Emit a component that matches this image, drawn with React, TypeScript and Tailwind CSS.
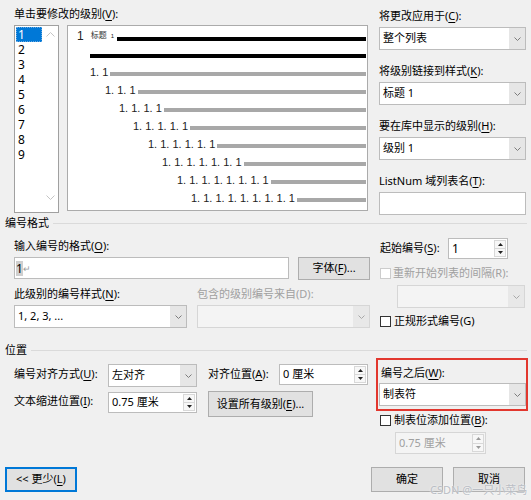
import React from "react";

const Chevron = ({ color = "#808080" }: { color?: string }) => (
  <svg width="7" height="4" viewBox="0 0 7 4">
    <path d="M0.5 0.5 L3.5 3.5 L6.5 0.5" fill="none" stroke={color} strokeWidth="1" />
  </svg>
);

const ChevronUp = ({ color = "#c4c4c4" }: { color?: string }) => (
  <svg width="9" height="5" viewBox="0 0 9 5">
    <path d="M0.5 4.5 L4.5 0.5 L8.5 4.5" fill="none" stroke={color} strokeWidth="1" />
  </svg>
);
const ChevronDown = ({ color = "#c4c4c4" }: { color?: string }) => (
  <svg width="9" height="5" viewBox="0 0 9 5">
    <path d="M0.5 0.5 L4.5 4.5 L8.5 0.5" fill="none" stroke={color} strokeWidth="1" />
  </svg>
);

const TriUp = ({ color = "#222" }: { color?: string }) => (
  <svg width="5" height="3" viewBox="0 0 5 3">
    <path d="M0 3 L2.5 0 L5 3 Z" fill={color} />
  </svg>
);
const TriDown = ({ color = "#222" }: { color?: string }) => (
  <svg width="5" height="3" viewBox="0 0 5 3">
    <path d="M0 0 L2.5 3 L5 0 Z" fill={color} />
  </svg>
);

function Combo({ className = "", text = "", disabled = false }: { className?: string; text?: React.ReactNode; disabled?: boolean }) {
  return (
    <div
      className={`flex h-[23px] shrink-0 border ${
        disabled ? "border-[#d6d6d6] bg-[#f4f4f4]" : "border-[#bcbcbc] bg-white"
      } ${className}`}
    >
      <div className={`flex flex-1 items-center pl-[3px] ${disabled ? "text-[#a0a0a0]" : "text-black"}`}>{text}</div>
      <div className={`flex w-[16px] items-center justify-center ${disabled ? "bg-[#e8e8e8]" : "bg-[#e6e6e6]"}`}>
        <Chevron color={disabled ? "#a8a8a8" : "#7c7c7c"} />
      </div>
    </div>
  );
}

function Spin({ className = "", text = "", disabled = false }: { className?: string; text?: React.ReactNode; disabled?: boolean }) {
  return (
    <div
      className={`flex shrink-0 border ${
        disabled ? "border-[#d6d6d6] bg-[#f4f4f4]" : "border-[#bcbcbc] bg-white"
      } ${className}`}
    >
      <div className={`flex flex-1 items-center pl-[3px] ${disabled ? "text-[#a0a0a0]" : "text-black"}`}>{text}</div>
      <div className="my-[1px] mr-[1px] flex w-[12px] flex-col border border-[#d8d8d8] bg-[#f7f7f7]">
        <div className="flex flex-1 items-center justify-center border-b border-[#d8d8d8]">
          <TriUp color={disabled ? "#9a9a9a" : "#222"} />
        </div>
        <div className="flex flex-1 items-center justify-center">
          <TriDown color={disabled ? "#9a9a9a" : "#222"} />
        </div>
      </div>
    </div>
  );
}

function Check({ disabled = false }: { disabled?: boolean }) {
  return (
    <div
      className={`h-[11px] w-[11px] shrink-0 border bg-white ${
        disabled ? "border-[#cccccc]" : "border-[#333333]"
      }`}
    />
  );
}

function Btn({ className = "", children }: { className?: string; children: React.ReactNode }) {
  return (
    <div className={`flex shrink-0 items-center justify-center border border-[#adadad] bg-[#e1e1e1] ${className}`}>
      {children}
    </div>
  );
}

const U = ({ children }: { children: React.ReactNode }) => (
  <span className="underline decoration-1 underline-offset-[2px]">{children}</span>
);

const Label = ({ className = "", children }: { className?: string; children: React.ReactNode }) => (
  <div className={`h-[14px] shrink-0 whitespace-nowrap leading-[14px] ${className}`}>{children}</div>
);

function SectionHeader({ className = "", title }: { className?: string; title: string }) {
  return (
    <div className={`flex h-[14px] items-center pl-[5px] pr-[4px] ${className}`}>
      <span className="leading-[14px]">{title}</span>
      <div className="ml-[4px] h-px flex-1 bg-[#dadada]" />
    </div>
  );
}

const levels = [
  { pl: "pl-[22px]", t: "1. 1" },
  { pl: "pl-[37px]", t: "1. 1. 1" },
  { pl: "pl-[51px]", t: "1. 1. 1. 1" },
  { pl: "pl-[65px]", t: "1. 1. 1. 1. 1" },
  { pl: "pl-[80px]", t: "1. 1. 1. 1. 1. 1" },
  { pl: "pl-[94px]", t: "1. 1. 1. 1. 1. 1. 1" },
  { pl: "pl-[109px]", t: "1. 1. 1. 1. 1. 1. 1. 1" },
  { pl: "pl-[123px]", t: "1. 1. 1. 1. 1. 1. 1. 1. 1" },
];

export default function App() {
  return (
    <div className="relative flex h-[500px] w-[531px] flex-col overflow-hidden bg-[#f0f0f0] font-['Noto_Sans','Noto_Sans_CJK_SC',sans-serif] text-[11px] text-black">
      {/* Top area */}
      <div className="flex pl-[14px] pt-[7px]">
        <div className="flex w-[354px] flex-col">
          <Label>
            单击要修改的级别(<U>V</U>):
          </Label>
          <div className="mt-[4px] flex gap-[8px]">
            {/* list box */}
            <div className="flex h-[188px] w-[45px] border border-[#a0a0a0] bg-white">
              <div className="w-[27px] pl-[1px] pt-[1px] text-[12px]">
                {["1", "2", "3", "4", "5", "6", "7", "8", "9"].map((n, i) => (
                  <div
                    key={n}
                    className={`h-[15px] pl-[2px] leading-[15px] ${
                      i === 0 ? "bg-[#0078d7] text-white outline-1 outline-dotted outline-[#6aa9e0] -outline-offset-1" : ""
                    }`}
                  >
                    {n}
                  </div>
                ))}
              </div>
              <div className="flex flex-1 flex-col items-center justify-between pb-[12px] pt-[6px]">
                <ChevronUp />
                <ChevronDown />
              </div>
            </div>
            {/* preview */}
            <div className="h-[186px] w-[301px] border border-[#ababab] bg-white pt-[1px] font-['Liberation_Sans','Noto_Sans_CJK_SC',sans-serif] text-[11px] text-[#222]">
              <div className="flex h-[18px] items-start pl-[9px] pr-[1px]">
                <span className="text-[12px] leading-[18px]">1</span>
                <span className="ml-[7px] text-[8px] leading-[18px] text-[#333]">标题</span>
                <span className="ml-[4px] text-[6px] leading-[18px]">1</span>
                <div className="ml-[3px] mt-[10px] h-[4px] flex-1 bg-black" />
              </div>
              <div className="flex h-[18px] items-start pl-[22px] pr-[1px]">
                <div className="mt-[9px] h-[4px] flex-1 bg-black" />
              </div>
              {levels.map((l) => (
                <div key={l.t} className={`flex h-[18px] items-start pr-[1px] ${l.pl}`}>
                  <span className="whitespace-pre leading-[18px]">{l.t}</span>
                  <div className="ml-[2px] mt-[9px] h-[4px] flex-1 bg-[#a8a8a8]" />
                </div>
              ))}
            </div>
          </div>
        </div>
        <div className="ml-[11px] mt-[2px] flex w-[147px] flex-col">
          <Label>
            将更改应用于(<U>C</U>):
          </Label>
          <Combo className="mt-[4px] w-[147px]" text="整个列表" />
          <Label className="mt-[14px]">
            将级别链接到样式(<U>K</U>):
          </Label>
          <Combo className="mt-[4px] w-[147px]" text="标题 1" />
          <Label className="mt-[14px]">
            要在库中显示的级别(<U>H</U>):
          </Label>
          <Combo className="mt-[4px] w-[147px]" text="级别 1" />
          <Label className="mt-[14px]">
            ListNum 域列表名(<U>T</U>):
          </Label>
          <div className="mt-[4px] h-[23px] w-[147px] border border-[#bcbcbc] bg-white" />
        </div>
      </div>

      {/* 编号格式 */}
      <SectionHeader className="mt-[1px]" title="编号格式" />
      <div className="flex">
        <div className="flex w-[380px] flex-col pl-[14px]">
          <Label className="mt-[9px]">
            输入编号的格式(<U>O</U>):
          </Label>
          <div className="mt-[4px] flex items-start">
            <div className="flex h-[22px] w-[275px] items-center border border-[#bcbcbc] bg-white pl-[1px] text-[12px]">
              <span className="bg-[#cfcfcf] leading-[15px]">1</span>
              <span className="text-[9px] leading-[15px] text-[#9a9a9a]">↵</span>
            </div>
            <Btn className="ml-[9px] h-[23px] w-[72px]">
              字体(<U>F</U>)...
            </Btn>
          </div>
          <div className="mt-[7px] flex">
            <Label className="w-[183px]">
              此级别的编号样式(<U>N</U>):
            </Label>
            <Label className="text-[#a0a0a0]">包含的级别编号来自(D):</Label>
          </div>
          <div className="mt-[4px] flex gap-[10px]">
            <Combo className="w-[173px]" text="1, 2, 3, ..." />
            <Combo className="w-[173px]" disabled />
          </div>
        </div>
        <div className="flex w-[146px] flex-col">
          <div className="mt-[8px] flex h-[21px] items-center">
            <span className="w-[68px] whitespace-nowrap">
              起始编号(<U>S</U>):
            </span>
            <Spin className="h-[21px] w-[60px]" text={<span className="text-[12px]">1</span>} />
          </div>
          <div className="mt-[7px] flex h-[14px] items-center">
            <Check disabled />
            <span className="ml-[2px] whitespace-nowrap text-[#a0a0a0]">重新开始列表的间隔(R):</span>
          </div>
          <Combo className="ml-[17px] mt-[5px] w-[128px]" disabled />
          <div className="mt-[6px] flex h-[14px] items-center">
            <Check />
            <span className="ml-[3px] whitespace-nowrap">正规形式编号(G)</span>
          </div>
        </div>
      </div>

      {/* 位置 */}
      <SectionHeader className="mt-[15px]" title="位置" />
      <div className="flex">
        <div className="flex w-[376px] flex-col pl-[14px]">
          <div className="mt-[7px] flex items-start">
            <div className="flex h-[21px] w-[94px] items-center whitespace-nowrap">
              编号对齐方式(<U>U</U>):
            </div>
            <Combo className="w-[89px]" text="左对齐" />
            <div className="ml-[11px] flex h-[21px] w-[71px] items-center whitespace-nowrap">
              对齐位置(<U>A</U>):
            </div>
            <Spin className="h-[21px] w-[89px]" text="0 厘米" />
          </div>
          <div className="mt-[4px] flex items-start">
            <div className="mt-[1px] flex h-[18px] w-[94px] items-center whitespace-nowrap">
              文本缩进位置(<U>I</U>):
            </div>
            <Spin className="mt-[1px] h-[21px] w-[89px]" text="0.75 厘米" />
            <Btn className="ml-[11px] h-[26px] w-[105px]">
              设置所有级别(<U>E</U>)...
            </Btn>
          </div>
        </div>
        <div className="flex w-[152px] flex-col">
          <div className="mt-[1px] flex h-[53px] flex-col border-2 border-[#e2372e] pb-[3px] pt-[6px]">
            <Label className="pl-[3px]">
              编号之后(<U>W</U>):
            </Label>
            <Combo className="ml-[1px] mt-[3px] w-[147px]" text="制表符" />
          </div>
          <div className="mt-[2px] flex h-[14px] items-center pl-[4px]">
            <Check />
            <span className="ml-[3px] whitespace-nowrap">
              制表位添加位置(<U>B</U>):
            </span>
          </div>
          <Spin className="ml-[19px] mt-[5px] h-[22px] w-[91px]" text="0.75 厘米" disabled />
        </div>
      </div>

      {/* bottom buttons */}
      <div className="mt-[13px] flex h-[25px] items-start justify-between pl-[5px] pr-[6px]">
        <div className="flex h-[25px] w-[72px] items-center justify-center border-2 border-[#0078d7] bg-[#e1e1e1]">
          &lt;&lt; 更少(<U>L</U>)
        </div>
        <div className="flex gap-[10px]">
          <Btn className="h-[25px] w-[72px]">确定</Btn>
          <Btn className="h-[25px] w-[72px]">取消</Btn>
        </div>
      </div>

      <div className="pointer-events-none absolute left-[430px] top-[483px] whitespace-nowrap text-[11px] leading-[14px] text-[#b9bdc4] [text-shadow:0_0_2px_#ffffff]">
        CSDN @一只小菜鸟
      </div>
    </div>
  );
}
